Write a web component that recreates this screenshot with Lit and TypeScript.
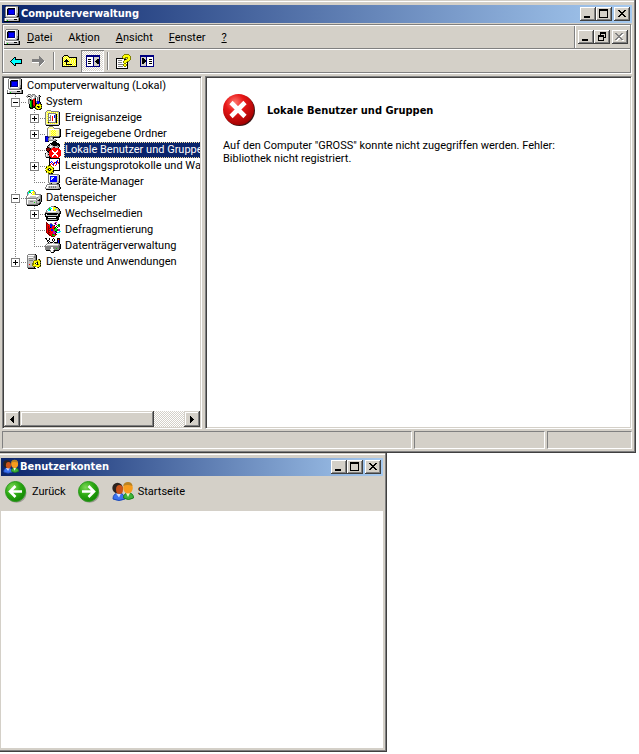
import { LitElement, html, css, svg, nothing } from "lit";
import { customElement, property } from "lit/decorators.js";

/* Pixel-art helper: every character is one pixel, looked up in the palette. */
const PALETTE: Record<string, string> = {
  k: "#000000", w: "#ffffff", g: "#808080", l: "#c0c0c0", s: "#d4d0c8",
  b: "#0000ff", n: "#000080", y: "#ffff00", o: "#808000", c: "#00ffff",
  t: "#008080", r: "#ff0000", m: "#800000", v: "#008000", e: "#00e000",
  f: "#ffff99", p: "#c000c0", d: "#404040", h: "#99ccff",
};

function pixels(rows: string[]) {
  const w = Math.max(...rows.map((r) => r.length));
  const out: unknown[] = [];
  rows.forEach((row, y) => {
    let x = 0;
    while (x < row.length) {
      const ch = row[x];
      let n = 1;
      while (row[x + n] === ch) n++;
      if (PALETTE[ch]) out.push(svg`<rect x=${x} y=${y} width=${n} height="1" fill=${PALETTE[ch]}></rect>`);
      x += n;
    }
  });
  return html`<svg class="px" width=${w} height=${rows.length} viewBox="0 0 ${w} ${rows.length}" shape-rendering="crispEdges" aria-hidden="true">${out}</svg>`;
}

const ART: Record<string, string[]> = {
  computer: [
    "..gggggggggggg..", ".gwwwwwwwwwwllk.", ".gwlkkkkkkkwllk.", ".gwknnnnnnnwllk.",
    ".gwknbbbbbnwllk.", ".gwknbbbbbnwllk.", ".gwknbbbbbnwllk.", ".gwknbbbbbnwlgk.",
    ".gwknnnnnnnwlgk.", ".gwlwwwwwwwllgk.", ".gllllllllllgkk.", "..ggggggggggggg.",
    "gwwwwwwwwwwwwwgk", "gwllllllllkkklgk", "gwlellllllllllgk", "kkkkkkkkkkkkkkkk",
  ],
  tools: [
    "..ggg.ggg.......", ".glwlglllg..lk..", "glkkllgwlgg.lgk.", ".g..glwwlg.glk..",
    "...gwlwlgk.glk..", "..ggkglrrk.glk..", "..glkvkrrk.glk..", "..glevkrrkgbbk..",
    "..glevkrrkgbbbk.", "..glevkrrkkbbok.", "...kevkrrkoyoyok", "...kevkmrkyyyyyo",
    "...kevkmkoykkoyk", "...kkvkkkoyykoyo", "....kkk..koyyyok", "..........okokk.",
  ],
  events: [
    "..gggg..........", ".gffffgggggggg..", "gfyfyfyfyfyfylk.", "gffggggggggfflk.",
    "gfygwwwwwwgkylk.", "gffgwgwwwbgkflk.", "gfygwgwrwbgkylk.", "gffgggwrwbgkflk.",
    "gfygwgwrwwgkylk.", "gffgwgwrwwgkflk.", "gfygggwrwwgkylk.", "gffgwwwwwwgkflk.",
    "gfykgggggggkylk.", "gffyfyfyfyfyflk.", "glllllllllllllk.", ".kkkkkkkkkkkkk..",
  ],
  share: [
    "....gggg........", "...gffffg.......", "..gffffffgggggg.", "..gwwwwwwwwwwwgk",
    "..gwfffyfyffffgk", "..gwffyfyfyfffgk", "..gwfffyfyffffgk", "..gwffyfyfyfffgk",
    "..gwfffyfyffffgk", "..gwffyfyfyfffgk", "nnngggggggggggkk", "nbbngllgkkkkkkk.",
    "nbbgllwlk.......", "nbbgllllllg.....", "nbbgggggllgk....", "nnnk....kkk.....",
  ],
  users: [
    ".......kkkkk....", ".....kkkkkkkkk..", "....kwkkkkkkkkk.", "...kgllgkkkkgkk.",
    "..kllwwllgllglk.", "..kkgwllmmlllk..", ".kmmmkgrrrrrrr..", ".mmmmkrrrrrrrrr.",
    ".kmmkrrwrrrrwrrr", "..kkrrrwwrrwwrrr", ".llkrrrrwwwwrrrr", "kwllrrrrrwwrrrrr",
    "gwlkrrrrwwwwrrrr", "gwllrrrwwrrwwrrr", "glllkrrwrrrrwrr.", ".kkkkkrrrrrrrr..",
  ],
  perf: [
    "....kkkkkkkkkkk.", "....kwwwwwwwwwk.", "....kwwwwwwwbwk.", "....kwbwwwwbrwk.",
    "....kbwbwrbbrbk.", "....kwrwbrwbwrk.", "....krwrbwwrwwk.", "...okowwrwrwwwk.",
    ".oyoyyowwwwwwwk.", ".kyyyyyoywwwwwk.", "oyyokoyykwwwwwk.", ".yokwkoyowwwwwk.",
    "oyyokoyykkkkkkk.", ".kyyyyyok.......", ".oyoyyoyo.......", "...okokk........",
  ],
  device: [
    "...ggggggggggg..", "...gwwwwwwwwllk.", "...gwbbbbbbbllk.", "...gwbhhwbbbllk.",
    "...gwbhwbbbbllk.", "...gwbwbbbbbllk.", "...gwbbbbbbbllk.", "...gwbbbbbbblgk.",
    "...glllllllllgk.", "....ggkllllgkk..", "..ggggggggggggk.", ".gwwwwwwwwwwllk.",
    ".gwlglglglglllk.", "gwwlglglglglllgk", "gllllllllllllggk", ".kkkkkkkkkkkkkk.",
  ],
  storage: [
    "...gcccg........", "..gecwwyg.......", ".gceewyyyg......", ".gcwwgwylg......",
    ".glwwwyyygggggg.", ".gwwwwwwwwwwwlgk", "gwwwllllllwwllgk", "gwlllllllllgllgk",
    "ggggggggggglllgk", "gwwwwwwwwwgllkgk", "gwlllllllllgkkgk", "gwllggglllgllggk",
    "gwllllllelgllgk.", "gwllllllllgggkk.", "ggggggggggggkk..", ".kkkkkkkkkkk....",
  ],
  removable: [
    "......gggkk.....", "....gcwwyygkk...", "...geccwyyyylk..", "..gceewwyycllgk.",
    ".gwccgwwgyywlgk.", ".glwwwwwwwwlllgk", "ggllllllllllllgk", "kkkkkkkkkkkkkgkk",
    "kwkkkkkkkkkklkk.", "kllllllllllllkk.", "kkkkkkkkkkkkkkk.", ".kkwwwwwwwwkkk..",
    ".kkkkkkkkkkkkk..", ".kgllllllllgkk..", "..kkkkkkkkkkk...", "................",
  ],
  defrag: [
    ".m........pp....", ".mm..gg..pk.....", ".mrmgbbg..pp.vv.", ".mrrrbbbgk..evv.",
    ".mrmrbbrrr.k.ev.", ".mrmrkbrrrk.k...", ".mrmmrrrrkee....", ".mrmrrbbreeevpp.",
    ".mrmmrbbreevvpp.", ".mrmrrrrppkv..cc", ".mrmmrrrpppkccc.", "..mmrrrrppk.....",
    "...mmrrvvrmm....", "....mmrveer.....", "......mmmm......", "................",
  ],
  disk: [
    "kk..k...k...kkk.", ".kwwk..kwk..krk.", "..kk...kwk..kbk.", "..kwk...k...kbk.",
    "...kwkkkwkkkkbk.", "..gggllwllggggk.", ".gwwwwwwwwwwwlgk", "gwlllllllllllggk",
    "ggggggggggggggdk", "ggggggwwggggggdk", "ggggggwwgggeggdk", "gggggwwwwgggggk.",
    ".kkkkgwwgkkkkk..", ".....gwwgk......", "......kkk.......", "................",
  ],
  services: [
    "..gggggggk......", ".gwwwwwwlgk.....", ".gllllllggk.....", ".gwwwwwlggk.....",
    ".glggggllgk.....", ".glllllllgk.ok..", ".glggggloooyyoo.", ".gllllloyyyoyyk.",
    ".gllllloyyokyyo.", ".gllllooykwkyyk", ".glrllooyyokoyo.", ".glllloyyyyyyyk.",
    ".gllllloooyyyoo.", ".gggggggk..ok...", "..kkkkkkkk......", "................",
  ],
  backArrow: [
    "....kk......", "...kck......", "..kcckkkkkkk", ".kccccccccck", "kcccccccccck", ".kccccccccck", "..kcckkkkkkk", "...kck......", "....kk......",
  ],
  forward: [
    ".......g.....", ".......gg....", ".......ggg...", "ggggggggggg..", "gggggggggggg.", "ggggggggggggw", "wwwwwwwggggw.", ".......gggw..", ".......ggw...", ".......gw....",
  ],
  up: [
    "..kkkk.........", ".kfyfyk........", "kfyfyfykkkkkkkk", "kyfyfyfyfyfyfyk", "kfyfkfyfyfyfyfk", "kyfkkkfyfyfyfyk",
    "kfkkkkkyfyfyfyk", "kyfykyfyfyfyfyk", "kfyfkfyfyfyfyfk", "kyfykkkkkkfyfyk", "kfyfyfyfyfyfyfk", "kkkkkkkkkkkkkkk",
  ],
  treePane: [
    "nnnnnnnnnnnnnn", "nnnnnnnnnnnnnn", "nwwwwwwnsssssn", "nwwwwwwnsssssn", "nwkkkwwnssskkn", "nwwwwwwnsskkkn",
    "nwkkkwwnskkkkn", "nwwwwwwnsskkkn", "nwkkkwwnssskkn", "nwwwwwwnsssssn", "nwwwwwwnsssssn", "nnnnnnnnnnnnnn",
  ],
  actionPane: [
    "nnnnnnnnnnnnnn", "nnnnnnnnnnnnnn", "nsssssnwwwwwwn", "nskkssnwwwwwwn", "nskkksnwwkkkwn", "nskkkknwwwwwwn",
    "nskkkknwwkkkwn", "nskkksnwwwwwwn", "nskkssnwwkkkwn", "nsssssnwwwwwwn", "nsssssnwwwwwwn", "nnnnnnnnnnnnnn",
  ],
  help: [
    "........ooooo..", ".......oyyyyyo.", "......oyyyyyyyo", "......oyyoooyyo", "kkkkkkkooo.oyyo", "kwwwwwwwkkoyyyo",
    "kwggggwwoyyyyo.", "kwwwwwwoyyyoo..", "kwggggwoyyok...", "kwwwwwwwoowk...", "kwgggggoyyok...", "kwwwwwwoyyok...",
    "kwgggggwoowk...", "kwwwwwwwwwwk...", "kkkkkkkkkkkk...",
  ],
  min: [".........", ".........", ".........", ".........", ".........", ".........", ".kkkkkk..", ".kkkkkk.."],
  max: ["kkkkkkkkk", "kkkkkkkkk", "k.......k", "k.......k", "k.......k", "k.......k", "k.......k", "k.......k", "kkkkkkkkk"],
  restore: ["..kkkkkk", "..kkkkkk", "..k....k", "kkkkkk.k", "kkkkkk.k", "k....kkk", "k....k..", "k....k..", "kkkkkk.."],
  close: ["kk....kk", ".kk..kk.", "..kkkk..", "...kk...", "..kkkk..", ".kk..kk.", "kk....kk"],
  closeOff: ["gg....gg.", ".gg..ggww", "..ggggww.", "...ggww..", "..gggg...", ".ggwwgg..", "ggww..gg.", ".ww....ww"],
  left: ["...k", "..kk", ".kkk", "kkkk", ".kkk", "..kk", "...k"],
  right: ["k...", "kk..", "kkk.", "kkkk", "kkk.", "kk..", "k..."],
};

const icon = (name: string) => pixels(ART[name]);

const people = (size: number) => html`<svg width=${size} height=${size} viewBox="0 0 22 22" aria-hidden="true">
  <path d="M1 18q0-6 6-6 5 0 6 6-6 3-12 0z" fill="#3a72f0" stroke="#1d48b4"></path>
  <path d="M4 12.500l3 4 2-4z" fill="#cfe0ff"></path>
  <circle cx="5.500" cy="7" r="5.200" fill="#2b2320"></circle><ellipse cx="7.500" cy="8.500" rx="3.500" ry="4.500" fill="#c9521a"></ellipse>
  <path d="M11.500 17q0-5 5-5 5 0 5 5-5 3-10 0z" fill="#3fb53a" stroke="#19801c"></path>
  <path d="M14 12l2 4 2-4z" fill="#e8f5d8"></path>
  <ellipse cx="16" cy="7" rx="4.800" ry="5.500" fill="#f79c1e"></ellipse><path d="M11 5q1-4 5-4 4 0 4.500 4-5-2-9.500 0z" fill="#b98222"></path>
</svg>`;

const ball = (id: string, arrow: string) => html`<svg width="22" height="22" viewBox="0 0 22 22" aria-hidden="true">
  <defs><radialGradient id=${id} cx="35%" cy="30%" r="80%"><stop offset="0" stop-color="#7ed957"></stop><stop offset=".5" stop-color="#2ba812"></stop><stop offset="1" stop-color="#0d8000"></stop></radialGradient></defs>
  <ellipse cx="11.500" cy="12" rx="10" ry="9.800" fill="#9c9a92"></ellipse>
  <circle cx="10.500" cy="10.500" r="10" fill="url(#${id})" stroke="#2b9a1e"></circle>
  <path d=${arrow} fill="none" stroke="#fff" stroke-width="2.600"></path>
</svg>`;

const errorIcon = html`<svg width="33" height="33" viewBox="0 0 33 33" role="img" aria-label="Fehler">
  <defs><radialGradient id="red" cx="38%" cy="28%" r="75%"><stop offset="0" stop-color="#ff7a70"></stop><stop offset=".4" stop-color="#e81818"></stop><stop offset="1" stop-color="#a00000"></stop></radialGradient></defs>
  <circle cx="16.500" cy="16.500" r="15.500" fill="#3c1414"></circle>
  <circle cx="15.500" cy="15.500" r="15.500" fill="url(#red)"></circle>
  <path d="M8 8.500L22 22.500M22 8.500L8 22.500" stroke="#fff" stroke-width="4.600"></path>
</svg>`;

const sharedStyles = css`
  * { box-sizing: border-box; }
  svg { display: block; flex: none; }
  button { font: inherit; color: inherit; margin: 0; padding: 0; border: 0; background: none; display: flex; align-items: center; justify-content: center; }
`;

@customElement("title-bar")
export class TitleBar extends LitElement {
  @property() heading = "";
  static styles = [sharedStyles, css`
    :host { display: flex; align-items: center; height: 18px; background: linear-gradient(90deg, #0a246a, #a6caf0); color: #fff; padding: 0 2px; gap: 1px; }
    h1 { flex: 1; margin: 0; font: bold 11px/18px "DejaVu Sans Condensed", "DejaVu Sans", sans-serif; white-space: nowrap; }
    .controls { display: flex; }
    button { width: 16px; height: 14px; background: #d4d0c8; box-shadow: inset -1px -1px #404040, inset 1px 1px #fff, inset -2px -2px #808080; padding: 0 1px 1px 0; }
    .close { margin-left: 2px; }
  `];
  render() {
    return html`<slot></slot><h1>${this.heading}</h1>
      <div class="controls">
        <button aria-label="Minimieren">${icon("min")}</button>
        <button aria-label="Maximieren">${icon("max")}</button>
        <button class="close" aria-label="Schließen">${icon("close")}</button>
      </div>`;
  }
}

interface Node { label: string; icon: string; open?: boolean; toggle?: boolean; selected?: boolean; children?: Node[]; }

const TREE: Node[] = [
  { label: "System", icon: "tools", toggle: true, open: true, children: [
    { label: "Ereignisanzeige", icon: "events", toggle: true },
    { label: "Freigegebene Ordner", icon: "share", toggle: true },
    { label: "Lokale Benutzer und Gruppen", icon: "users", selected: true },
    { label: "Leistungsprotokolle und Warnungen", icon: "perf", toggle: true },
    { label: "Geräte-Manager", icon: "device" },
  ] },
  { label: "Datenspeicher", icon: "storage", toggle: true, open: true, children: [
    { label: "Wechselmedien", icon: "removable", toggle: true },
    { label: "Defragmentierung", icon: "defrag" },
    { label: "Datenträgerverwaltung", icon: "disk" },
  ] },
  { label: "Dienste und Anwendungen", icon: "services", toggle: true },
];

@customElement("console-tree")
export class ConsoleTree extends LitElement {
  static styles = [sharedStyles, css`
    :host { display: block; overflow: hidden; }
    ul { list-style: none; margin: 0; padding: 0; }
    .root { padding: 0 3px; }
    .row { display: flex; align-items: center; height: 16px; white-space: nowrap; }
    .guide { display: grid; flex: none; width: 19px; height: 16px; align-items: center; }
    .guide > * { grid-area: 1 / 1; }
    .toggle { width: 9px; height: 9px; margin-left: 4px; border: 1px solid #808080; background: #fff; }
    .label { margin-left: 3px; padding: 0 2px 0 1px; line-height: 16px; }
    .selected { background: #0a246a; color: #fff; outline: 1px dotted #f5db95; outline-offset: -1px; }
  `];

  private guide(node: Node | null, last: boolean) {
    const end = last ? 8 : 16;
    return html`<span class="guide">
      <svg width="19" height="16" shape-rendering="crispEdges" aria-hidden="true">
        ${node || !last ? svg`<path d="M8.500 0V${end}" stroke="#808080" stroke-dasharray="1 1"></path>` : nothing}
        ${node ? svg`<path d="M8 8.500H19" stroke="#808080" stroke-dasharray="1 1"></path>` : nothing}
      </svg>
      ${node?.toggle ? html`<button class="toggle" aria-label=${node.open ? "Reduzieren" : "Erweitern"}>
        <svg width="7" height="7" shape-rendering="crispEdges"><path d=${node.open ? "M1 3h5v1h-5z" : "M1 3h5v1h-5zM3 1h1v5h-1z"}></path></svg>
      </button>` : nothing}
    </span>`;
  }

  private item(node: Node, last: boolean, parents: boolean[]): unknown {
    return html`<li role="treeitem" aria-selected=${node.selected ? "true" : "false"}>
      <div class="row">
        ${parents.map((p) => this.guide(null, p))}${this.guide(node, last)}
        ${icon(node.icon)}<span class="label ${node.selected ? "selected" : ""}">${node.label}</span>
      </div>
      ${node.children ? html`<ul role="group">${node.children.map((c, i, a) => this.item(c, i === a.length - 1, [...parents, last]))}</ul>` : nothing}
    </li>`;
  }

  render() {
    return html`<ul class="root" role="tree">
      <li role="treeitem">
        <div class="row">${icon("computer")}<span class="label">Computerverwaltung (Lokal)</span></div>
        <ul role="group">${TREE.map((n, i) => this.item(n, i === TREE.length - 1, []))}</ul>
      </li>
    </ul>`;
  }
}

@customElement("app-root")
export class AppRoot extends LitElement {
  static styles = [sharedStyles, css`
    :host { display: grid; grid-template-rows: 453fr 299fr; min-height: 100vh; padding-bottom: 2px; box-sizing: border-box; background: #fff; color: #000; font: 11px/13px Roboto, "Noto Sans", sans-serif; }
    .window { display: flex; flex-direction: column; background: #d4d0c8; box-shadow: inset -1px -1px #404040, inset -2px -2px #808080, inset 0 1px #d4d0c8, inset 0 2px #fff; }
    .console { margin-right: 3px; padding: 5px 4px 4px 2px; }
    .accounts { width: 61%; max-width: 387px; padding: 5px 4px 4px 1px; }

    .bars { margin: 1px 1px 0 0; border: 1px solid #808080; box-shadow: 1px 1px #fff, inset 1px 1px #fff; padding: 1px 0 0 1px; }
    .menubar { display: flex; align-items: center; height: 23px; border-bottom: 1px solid #808080; }
    .menus { display: flex; flex: 1; }
    .menus button { padding: 0 8px; }
    .menus button:first-child { padding-left: 7px; }
    .child { display: flex; align-items: center; align-self: stretch; padding: 0 2px 0 3px; border-left: 1px solid #808080; box-shadow: inset 1px 0 #fff; }
    .child button { width: 16px; height: 14px; box-shadow: inset -1px -1px #404040, inset 1px 1px #fff, inset -2px -2px #808080; padding: 0 1px 1px 0; }
    .child button:last-child { margin-left: 2px; }
    .tools { display: flex; align-items: center; height: 23px; border-top: 1px solid #fff; }
    .tools button { width: 23px; height: 22px; }
    .tools .pressed { box-shadow: inset 1px 1px #808080, inset -1px -1px #fff; background: repeating-conic-gradient(#fff 0 25%, #d4d0c8 0 50%) 0 0 / 2px 2px; }
    .sep { width: 2px; height: 18px; margin: 0 3px; border-left: 1px solid #808080; border-right: 1px solid #fff; }

    .panes { flex: 1; display: grid; grid-template-columns: 200px minmax(0, 1fr); gap: 3px; margin-top: 3px; }
    .pane { display: flex; flex-direction: column; min-width: 0; background: #fff; border: 1px solid; border-color: #808080 #fff #fff #808080; box-shadow: inset 1px 1px #404040, inset -1px -1px #d4d0c8; padding: 1px; }
    .pane console-tree { flex: 1; }
    .scroll { display: grid; grid-template-columns: 16px minmax(0, 134fr) minmax(0, 30fr) 16px; height: 16px; background: repeating-conic-gradient(#fff 0 25%, #d4d0c8 0 50%) 0 0 / 2px 2px; }
    .raised { background: #d4d0c8; box-shadow: inset -1px -1px #404040, inset 1px 1px #d4d0c8, inset -2px -2px #808080, inset 2px 2px #fff; }
    .scroll .end { grid-column: 4; }
    .message { padding: 16px; }
    .message header { display: flex; align-items: center; gap: 11px; height: 32px; }
    h2 { margin: 0; font: bold 11px/13px "DejaVu Sans Condensed", "DejaVu Sans", sans-serif; }
    .message p { margin: 13px 0 0; }

    .status { display: grid; grid-template-columns: 410fr 131fr 85fr; gap: 2px; margin-top: 2px; height: 18px; }
    .status span { border: 1px solid; border-color: #808080 #fff #fff #808080; }

    nav { display: flex; align-items: center; height: 35px; padding: 0 4px 4px; gap: 12px; }
    nav button { gap: 5px; }
    nav .home { gap: 4px; }
    .page { flex: 1; background: #fff; }
  `];

  render() {
    return html`
      <section class="window console" aria-label="Computerverwaltung">
        <title-bar heading="Computerverwaltung">${icon("computer")}</title-bar>
        <div class="bars">
          <div class="menubar">
            ${icon("computer")}
            <div class="menus" role="menubar">
              <button role="menuitem"><span><u>D</u>atei</span></button>
              <button role="menuitem"><span>Ak<u>t</u>ion</span></button>
              <button role="menuitem"><span><u>A</u>nsicht</span></button>
              <button role="menuitem"><span><u>F</u>enster</span></button>
              <button role="menuitem"><span><u>?</u></span></button>
            </div>
            <div class="child">
              <button aria-label="Minimieren">${icon("min")}</button>
              <button aria-label="Wiederherstellen">${icon("restore")}</button>
              <button aria-label="Schließen" disabled>${icon("closeOff")}</button>
            </div>
          </div>
          <div class="tools" role="toolbar">
            <button aria-label="Zurück">${icon("backArrow")}</button>
            <button aria-label="Vorwärts" disabled>${icon("forward")}</button>
            <span class="sep"></span>
            <button aria-label="Aufwärts">${icon("up")}</button>
            <button class="pressed" aria-label="Konsolenstruktur" aria-pressed="true">${icon("treePane")}</button>
            <span class="sep"></span>
            <button aria-label="Hilfe">${icon("help")}</button>
            <button aria-label="Aktionsbereich">${icon("actionPane")}</button>
          </div>
        </div>
        <div class="panes">
          <div class="pane">
            <console-tree></console-tree>
            <div class="scroll">
              <button class="raised" aria-label="Nach links">${icon("left")}</button>
              <div class="raised"></div>
              <button class="raised end" aria-label="Nach rechts">${icon("right")}</button>
            </div>
          </div>
          <main class="pane">
            <div class="message">
              <header>${errorIcon}<h2>Lokale Benutzer und Gruppen</h2></header>
              <p>Auf den Computer "GROSS" konnte nicht zugegriffen werden. Fehler:<br>Bibliothek nicht registriert.</p>
            </div>
          </main>
        </div>
        <div class="status"><span></span><span></span><span></span></div>
      </section>
      <section class="window accounts" aria-label="Benutzerkonten">
        <title-bar heading="Benutzerkonten">${people(16)}</title-bar>
        <nav>
          <button>${ball("back", "M17 10.500H6M10.500 5L5 10.500L10.500 16")}Zurück</button>
          <button aria-label="Vorwärts">${ball("fwd", "M4 10.500H15M10.500 5L16 10.500L10.500 16")}</button>
          <button class="home">${people(22)}Startseite</button>
        </nav>
        <div class="page"></div>
      </section>`;
  }
}
